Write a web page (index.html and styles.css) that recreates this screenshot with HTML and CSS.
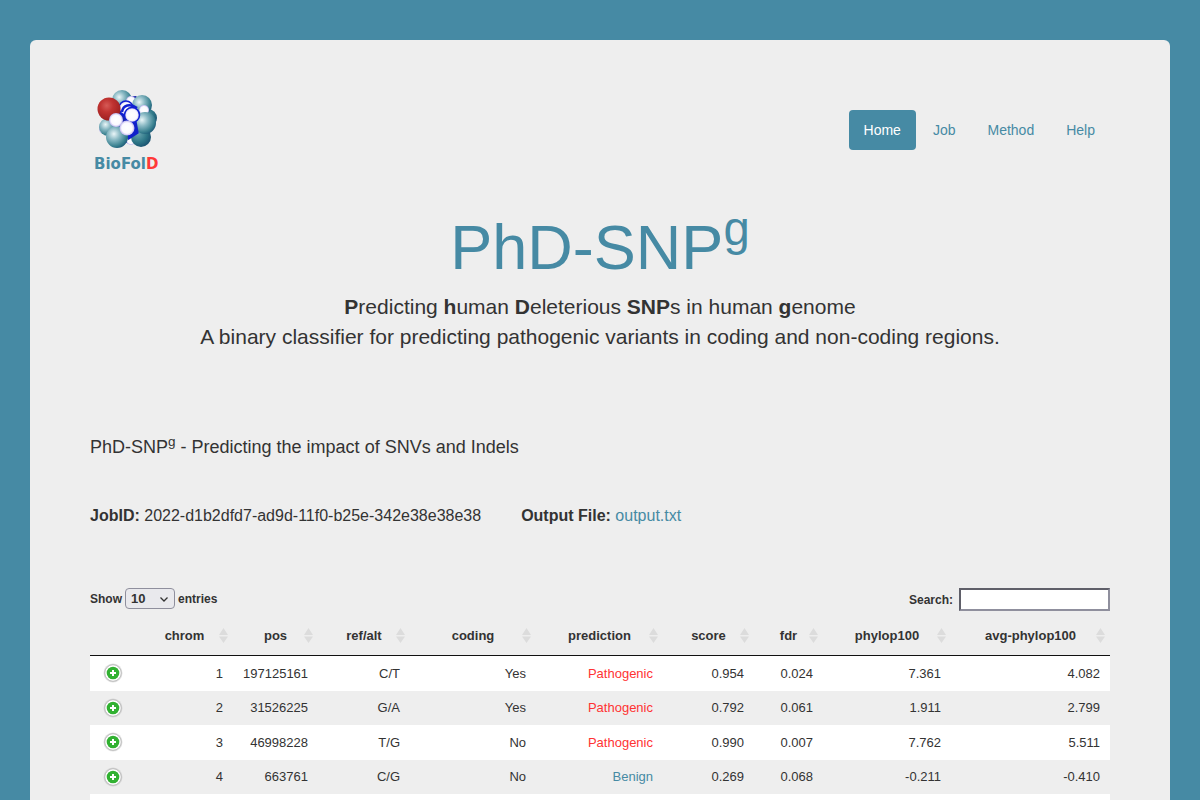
FILE: index.html
```html
<!DOCTYPE html>
<html lang="en">
<head>
<meta charset="utf-8">
<title>PhD-SNPg</title>
<meta name="viewport" content="width=device-width, initial-scale=1">
<link rel="stylesheet" href="styles.css">
</head>
<body>
<svg class="defs" width="0" height="0" aria-hidden="true">
  <symbol id="sort" viewBox="0 0 9 15"><path d="M4.5 0 9 7H0zM0 8.500h9L4.500 15z" fill="#dcdcdc"/></symbol>
  <symbol id="plus" viewBox="0 0 20 20">
    <circle cx="10" cy="10" r="9.500" fill="#bdbdbd" opacity=".45"/>
    <circle cx="10" cy="10" r="8.300" fill="#fff" stroke="#bbb" stroke-width="1"/>
    <circle cx="10" cy="10" r="6.300" fill="#31b131"/>
    <path d="M10 7v6M7 10h6" stroke="#fff" stroke-width="2"/>
  </symbol>
</svg>
<div class="page">
  <header class="header">
    <a class="logo" href="#" aria-label="BioFolD">
      <svg width="74" height="80" viewBox="0 0 74 80">
        <defs>
          <radialGradient id="teal" cx=".36" cy=".36" r=".7"><stop offset="0" stop-color="#eaf6f8"/><stop offset=".4" stop-color="#88b8c3"/><stop offset=".8" stop-color="#39808f"/><stop offset="1" stop-color="#1d5a78"/></radialGradient>
          <radialGradient id="deep" cx=".36" cy=".34" r=".7"><stop offset="0" stop-color="#6ba5b0"/><stop offset=".6" stop-color="#2f7888"/><stop offset="1" stop-color="#1a5270"/></radialGradient>
          <radialGradient id="red" cx=".4" cy=".35" r=".7"><stop offset="0" stop-color="#d65a56"/><stop offset=".4" stop-color="#c03331"/><stop offset="1" stop-color="#991d1e"/></radialGradient>
          <radialGradient id="white"><stop offset="0" stop-color="#fff"/><stop offset=".7" stop-color="#fbf9ff"/><stop offset="1" stop-color="#bdb4ee"/></radialGradient>
        </defs>
        <path d="M25 8 46 6 60 20 56 49 40 54 23 48 13 35 19 20z" fill="#1b26ac"/>
        <circle cx="32" cy="10" r="10" fill="url(#teal)"/>
        <circle cx="41" cy="11" r="5" fill="url(#white)"/>
        <circle cx="14" cy="39" r="5" fill="url(#white)"/>
        <circle cx="18" cy="37" r="9" fill="url(#teal)"/>
        <circle cx="41" cy="50" r="5" fill="url(#white)"/>
        <circle cx="51" cy="47" r="10" fill="url(#deep)"/>
        <circle cx="58" cy="28" r="9" fill="url(#deep)"/>
        <circle cx="52" cy="15" r="10" fill="url(#teal)"/>
        <circle cx="54" cy="20" r="5" fill="url(#white)"/>
        <circle cx="55" cy="33" r="11" fill="url(#teal)"/>
        <path d="M30 22 44 31 46 42 37 48" fill="none" stroke="#1020ca" stroke-width="5"/>
        <circle cx="36" cy="18" r="7" fill="url(#white)" stroke="#1020d2" stroke-width="1.500"/>
        <path d="M32 22C33 15 40 13 47 18" fill="none" stroke="#1020d2" stroke-width="2.500"/>
        <circle cx="42" cy="25" r="7.500" fill="url(#white)" stroke="#1020d2" stroke-width="1.500"/>
        <circle cx="19" cy="19" r="11.500" fill="url(#red)"/>
        <circle cx="27" cy="47" r="11" fill="url(#teal)"/>
        <circle cx="26" cy="30" r="7" fill="url(#white)"/>
        <circle cx="37" cy="38" r="7.500" fill="url(#white)"/>
        <text class="logo-text" x="4" y="79">BioFol<tspan class="logo-end">D</tspan></text>
      </svg>
    </a>
    <nav class="nav">
      <a class="nav-link active" href="#">Home</a>
      <a class="nav-link" href="#">Job</a>
      <a class="nav-link" href="#">Method</a>
      <a class="nav-link" href="#">Help</a>
    </nav>
  </header>
  <section class="hero">
    <h1 class="title">PhD-SNP<sup>g</sup></h1>
    <p class="lead"><b>P</b>redicting <b>h</b>uman <b>D</b>eleterious <b>SNP</b>s in human <b>g</b>enome<br>A binary classifier for predicting pathogenic variants in coding and non-coding regions.</p>
  </section>
  <main>
    <h2 class="subtitle">PhD-SNP<sup>g</sup> - Predicting the impact of SNVs and Indels</h2>
    <div class="job">
      <span><b>JobID:</b> 2022-d1b2dfd7-ad9d-11f0-b25e-342e38e38e38</span>
      <span><b>Output File:</b> <a class="link" href="#">output.txt</a></span>
    </div>
    <div class="controls">
      <div class="length">
        <label for="length">Show</label>
        <span class="select-wrap"><select class="select" id="length" aria-label="Show entries"><option>10</option><option>25</option><option>50</option></select><svg class="chevron" width="10" height="7" viewBox="0 0 10 7"><path d="M1.500 1.500 5 5l3.500-3.500" fill="none" stroke="#333" stroke-width="1.300"/></svg></span>
        <span>entries</span>
      </div>
      <div class="filter"><label for="search">Search:</label><input class="search" id="search" type="search"></div>
    </div>
    <table class="table">
      <colgroup><col class="c-open"><col class="c-chrom"><col class="c-pos"><col class="c-ref"><col class="c-coding"><col class="c-pred"><col class="c-score"><col class="c-fdr"><col class="c-phylop"><col class="c-avg"></colgroup>
      <thead>
        <tr>
          <th></th>
          <th><button class="sort"><span>chrom</span><svg><use href="#sort"/></svg></button></th>
          <th><button class="sort"><span>pos</span><svg><use href="#sort"/></svg></button></th>
          <th><button class="sort"><span>ref/alt</span><svg><use href="#sort"/></svg></button></th>
          <th><button class="sort"><span>coding</span><svg><use href="#sort"/></svg></button></th>
          <th><button class="sort"><span>prediction</span><svg><use href="#sort"/></svg></button></th>
          <th><button class="sort"><span>score</span><svg><use href="#sort"/></svg></button></th>
          <th><button class="sort"><span>fdr</span><svg><use href="#sort"/></svg></button></th>
          <th><button class="sort"><span>phylop100</span><svg><use href="#sort"/></svg></button></th>
          <th><button class="sort"><span>avg-phylop100</span><svg><use href="#sort"/></svg></button></th>
        </tr>
      </thead>
      <tbody>
        <tr><td class="open"><button class="plus" aria-label="Show details"><svg><use href="#plus"/></svg></button></td><td>1</td><td>197125161</td><td>C/T</td><td>Yes</td><td class="bad">Pathogenic</td><td>0.954</td><td>0.024</td><td>7.361</td><td>4.082</td></tr>
        <tr><td class="open"><button class="plus" aria-label="Show details"><svg><use href="#plus"/></svg></button></td><td>2</td><td>31526225</td><td>G/A</td><td>Yes</td><td class="bad">Pathogenic</td><td>0.792</td><td>0.061</td><td>1.911</td><td>2.799</td></tr>
        <tr><td class="open"><button class="plus" aria-label="Show details"><svg><use href="#plus"/></svg></button></td><td>3</td><td>46998228</td><td>T/G</td><td>No</td><td class="bad">Pathogenic</td><td>0.990</td><td>0.007</td><td>7.762</td><td>5.511</td></tr>
        <tr><td class="open"><button class="plus" aria-label="Show details"><svg><use href="#plus"/></svg></button></td><td>4</td><td>663761</td><td>C/G</td><td>No</td><td class="good">Benign</td><td>0.269</td><td>0.068</td><td>-0.211</td><td>-0.410</td></tr>
        <tr><td colspan="10"></td></tr>
      </tbody>
    </table>
  </main>
</div>
</body>
</html>
```
FILE: styles.css
```css
* { box-sizing: border-box; }
body {
  margin: 0;
  padding: 40px 30px 0;
  background: #468aa4;
  color: #333;
  font: 14px/20px "Liberation Sans", Arial, sans-serif;
}
.defs { position: absolute; }
.page {
  background: #eee;
  border-radius: 6px;
  padding: 50px 60px 0;
}
a { color: #468aa4; text-decoration: none; }
button { font: inherit; color: inherit; background: none; border: 0; padding: 0; cursor: pointer; }
sup { font-size: 75%; line-height: 0; position: relative; top: -0.5em; vertical-align: baseline; }

.header { display: flex; justify-content: space-between; align-items: center; }
.logo svg { display: block; overflow: visible; }
.logo-text { font: bold 15px "DejaVu Sans", sans-serif; fill: #468aa4; }
.logo-end { fill: #ff3838; }
.nav { display: flex; gap: 2px; }
.nav-link { padding: 10px 15px; border-radius: 4px; }
.nav-link.active { background: #468aa4; color: #fff; }

.hero { padding-top: 42px; text-align: center; }
.title { margin: 0 0 10px; font-size: 63px; line-height: 70px; font-weight: normal; color: #468aa4; }
.lead { margin: 0; font-size: 21px; line-height: 30px; }
.subtitle { margin: 84px 0 0; font-size: 18px; line-height: 22px; font-weight: normal; }
.job { display: flex; flex-wrap: wrap; gap: 40px; margin-top: 46px; font-size: 16px; line-height: 24px; }

.controls { display: flex; justify-content: space-between; align-items: flex-start; margin-top: 60px; font-size: 12px; font-weight: bold; }
.length { display: flex; align-items: center; gap: 3px; }
.select-wrap { position: relative; display: flex; }
.select { appearance: none; width: 50px; height: 21px; padding: 0 5px; border: 1px solid #8f8f9d; border-radius: 4px; background: #e9e9ed; color: #333; font: bold 13px "Liberation Sans", Arial, sans-serif; }
.chevron { position: absolute; right: 6px; top: 8px; pointer-events: none; }
.filter { display: flex; align-items: center; gap: 6px; }
.search { appearance: none; width: 151px; height: 23px; padding: 1px 2px; border: 2px solid; border-color: #5f5f69 #8f8f9d #8f8f9d #5f5f69; background: #fff; font: inherit; }

.table { width: 100%; margin-top: 5px; table-layout: fixed; border-collapse: separate; border-spacing: 0; font-size: 13px; }
.c-open { width: 46px; }
.c-chrom { width: 97px; }
.c-pos { width: 85px; }
.c-ref { width: 92px; }
.c-coding { width: 126px; }
.c-pred { width: 127px; }
.c-score { width: 91px; }
.c-fdr { width: 69px; }
.c-phylop { width: 128px; }
.c-avg { width: 159px; }
.table th { height: 40px; padding: 0; border-bottom: 1px solid #111; }
.sort { display: grid; align-items: center; width: 100%; padding: 0 5px; font-weight: bold; }
.sort > * { grid-area: 1 / 1; }
.sort span { justify-self: center; }
.sort svg { justify-self: end; width: 9px; height: 15px; }
.table td { height: 35px; padding: 0 10px; text-align: right; }
.table tbody tr:nth-child(odd) { background: #fff; }
.table tbody tr:nth-child(even) td { height: 34px; }
.table .open { padding: 7px 0 0; vertical-align: top; }
.plus { display: block; margin: 0 auto; }
.plus svg { display: block; width: 20px; height: 20px; }
.bad { color: #f33; }
.good { color: #468aa4; }
```
